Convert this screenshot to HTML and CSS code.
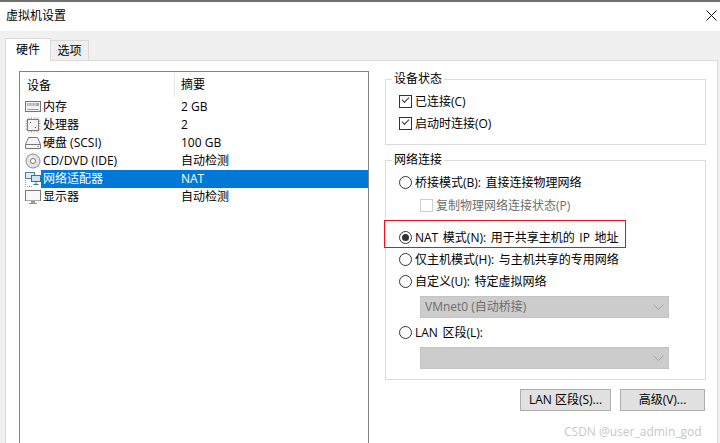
FILE: index.html
```html
<!DOCTYPE html>
<html lang="zh-CN">
<head>
  <meta charset="UTF-8" />
  <title>虚拟机设置</title>
  <link rel="stylesheet" href="styles.css">
</head>
<body>
  <div class="window">
    <div class="titlebar">
      <span>虚拟机设置</span>
      <svg class="close" width="11" height="11" viewBox="0 0 11 11"><path d="M.5.5l10 10M10.500.5l-10 10" stroke="#111" fill="none"/></svg>
    </div>

    <div class="main">
      <div class="tabs">
        <div class="tab active">硬件</div>
        <div class="tab">选项</div>
      </div>

      <div class="panel">
        <div class="list">
          <div class="list-head">
            <div class="col-name">设备</div>
            <div class="col-sum">摘要</div>
          </div>

          <div class="row">
            <div class="col-name">
              <svg class="icon" width="16" height="16" viewBox="0 0 16 16"><rect x=".5" y="2.500" width="15" height="10" fill="#f2f2f2" stroke="#777"/><rect x="2" y="4" width="12" height="3" fill="#a8a8a8"/><path d="M4 4v3M7 4v3M10 4v3" stroke="#eee"/><path d="M2.500 10.500h11" stroke="#999"/></svg>
              <span class="name">内存</span>
            </div>
            <div class="col-sum">2 GB</div>
          </div>
          <div class="row">
            <div class="col-name">
              <svg class="icon" width="16" height="16" viewBox="0 0 16 16"><rect x="2.500" y="2.500" width="11" height="11" fill="#f4f4f4" stroke="#777"/><path d="M4 .5v2M6.500 .5v2M9 .5v2M12 .5v2M4 13.500v2M6.500 13.500v2M9 13.500v2M12 13.500v2M.5 4h2M.5 6.500h2M.5 9h2M.5 12h2M13.500 4h2M13.500 6.500h2M13.500 9h2M13.500 12h2" stroke="#999"/><path d="M5 5h1v1H5zM10 10h1v1h-1z" fill="#555"/></svg>
              <span class="name">处理器</span>
            </div>
            <div class="col-sum">2</div>
          </div>
          <div class="row">
            <div class="col-name">
              <svg class="icon" width="16" height="16" viewBox="0 0 16 16"><path d="M3.500 2.500h9l3 7v4H.5v-4z" fill="#f6f6f6" stroke="#777"/><path d="M.5 9.500h15" stroke="#777"/><path d="M12 11.500h2" stroke="#999"/></svg>
              <span class="name">硬盘 (SCSI)</span>
            </div>
            <div class="col-sum">100 GB</div>
          </div>
          <div class="row">
            <div class="col-name">
              <svg class="icon" width="16" height="16" viewBox="0 0 16 16"><circle cx="8" cy="8" r="7" fill="#e4e4e4" stroke="#8a8a8a"/><circle cx="8" cy="8" r="2.500" fill="#fff" stroke="#777"/><path d="M4 6a4.500 4.500 0 0 1 3-2.500" stroke="#fff" fill="none"/></svg>
              <span class="name">CD/DVD (IDE)</span>
            </div>
            <div class="col-sum">自动检测</div>
          </div>
          <div class="row selected">
            <div class="col-name">
              <svg class="icon" width="16" height="16" viewBox="0 0 16 16"><rect x=".5" y="1.500" width="9" height="6" fill="#dfeaf5" stroke="#4a7fa8"/><rect x="6.500" y="4.500" width="9" height="6" fill="#cfe3f5" stroke="#2f76ad"/><path d="M11 11v2M8.500 13.500h5" stroke="#2f76ad"/><path d="M.5 9v6.500H7" stroke="#7a9ab5" stroke-dasharray="1 1" fill="none"/></svg>
              <span class="name sel-text">网络适配器</span>
            </div>
            <div class="col-sum">NAT</div>
          </div>
          <div class="row">
            <div class="col-name">
              <svg class="icon" width="16" height="16" viewBox="0 0 16 16"><rect x=".5" y="1.500" width="15" height="10" fill="#f8f8f8" stroke="#777"/><path d="M1 11.500h14" stroke="#aaa"/><path d="M6 12h4v2H6zM4 14h8v1H4z" fill="#999"/></svg>
              <span class="name">显示器</span>
            </div>
            <div class="col-sum">自动检测</div>
          </div>
        </div>

        <div class="side">
          <fieldset class="group status">
            <legend>设备状态</legend>
            <div class="opt"><span class="check on"></span>已连接(C)</div>
            <div class="opt"><span class="check on"></span>启动时连接(O)</div>
          </fieldset>

          <fieldset class="group network">
            <legend>网络连接</legend>
            <div class="opt"><span class="radio"></span>桥接模式(B): 直接连接物理网络</div>
            <div class="opt sub disabled"><span class="check"></span>复制物理网络连接状态(P)</div>
            <div class="opt nat"><span class="radio on"></span>NAT 模式(N): 用于共享主机的 IP 地址</div>
            <div class="opt"><span class="radio"></span>仅主机模式(H): 与主机共享的专用网络</div>
            <div class="opt"><span class="radio"></span>自定义(U): 特定虚拟网络</div>
            <div class="select">VMnet0 (自动桥接)<svg width="11" height="6" viewBox="0 0 11 6"><path d="M.5.500l5 5 5-5" stroke="#a6a6a6" fill="none"/></svg></div>
            <div class="opt lan"><span class="radio"></span>LAN 区段(L):</div>
            <div class="select">&nbsp;<svg width="11" height="6" viewBox="0 0 11 6"><path d="M.5.500l5 5 5-5" stroke="#a6a6a6" fill="none"/></svg></div>
          </fieldset>

          <div class="buttons">
            <div class="btn lan-btn">LAN 区段(S)...</div>
            <div class="btn adv-btn">高级(V)...</div>
          </div>
        </div>
      </div>
    </div>

    <div class="redbox"></div>
    <div class="watermark">CSDN @user_admin_god</div>
  </div>
</body>
</html>
```

FILE: styles.css
```css
html, body {
  margin: 0;
  padding: 0;
}
body {
  font-family: "Open Sans", "Noto Sans CJK SC", sans-serif;
  font-size: 12px;
  color: #000;
  background: #fff;
}
.window {
  position: relative;
  width: 720px;
  height: 443px;
  overflow: hidden;
}
.titlebar {
  height: 26px;
  border-top: 2px solid #707070;
  padding: 0 3px 3px 6px;
  display: flex;
  justify-content: space-between;
  align-items: center;
  background: #fff;
}
.main {
  background: #f0f0f0;
  padding: 7px 2px 0 5px;
  height: 405px;
}
.tabs {
  display: flex;
  align-items: flex-end;
  height: 22px;
}
.tab {
  height: 19px;
  line-height: 19px;
  width: 37px;
  text-align: center;
  background: #f0f0f0;
  border: 1px solid #d9d9d9;
  border-bottom: none;
  border-left: none;
}
.tab.active {
  position: relative;
  height: 22px;
  line-height: 22px;
  width: 44px;
  background: #fff;
  border-left: 1px solid #d9d9d9;
  margin-bottom: -1px;
  z-index: 1;
}
.panel {
  background: #fff;
  border: 1px solid #d9d9d9;
  height: 400px;
  padding: 10px 11px 0 13px;
  display: flex;
  gap: 16px;
}
.list {
  width: 348px;
  height: 400px;
  border: 1px solid #828282;
  flex-shrink: 0;
}
.list-head {
  display: flex;
  height: 26px;
  align-items: center;
}
.list-head .col-name {
  width: 154px;
  padding-left: 7px;
  box-sizing: border-box;
}
.list-head .col-sum {
  height: 24px;
  line-height: 24px;
  border-left: 1px solid #e5e5e5;
  padding-left: 6px;
}
.row {
  display: flex;
  height: 18px;
  line-height: 18px;
}
.col-name {
  width: 154px;
  display: flex;
  align-items: center;
}
.col-sum {
  padding-left: 7px;
  flex: 1;
}
.icon {
  margin-left: 5px;
  flex-shrink: 0;
}
.name {
  padding-left: 2px;
}
.row.selected .col-sum {
  background: #0078d7;
  color: #fff;
}
.sel-text {
  background: #0078d7;
  color: #fff;
  flex: 1;
}
.side {
  width: 321px;
  flex-shrink: 0;
}
.group {
  margin: 0;
  padding: 0 0 0 13px;
  border: 1px solid #dcdcdc;
  min-width: 0;
}
.group legend {
  padding: 0 2px;
  margin-left: -7px;
  line-height: 16px;
}
.status {
  height: 69px;
  padding-top: 3px;
}
.network {
  margin-top: 7px;
  padding-top: 3px;
  padding-bottom: 10px;
}
.opt {
  display: flex;
  align-items: center;
  height: 22px;
  word-spacing: 1.5px;
}
.sub {
  margin-left: 21px;
  margin-top: 1px;
}
.nat {
  margin-top: 10px;
}
.lan {
  margin-top: 3px;
}
.disabled {
  color: #6d6d6d;
}
.check {
  width: 11px;
  height: 11px;
  border: 1px solid #333;
  margin-right: 3px;
  flex-shrink: 0;
  background: #fff;
  position: relative;
}
.check.on::after {
  content: "";
  position: absolute;
  left: 2px;
  top: 1px;
  width: 6px;
  height: 3px;
  border-left: 1px solid #333;
  border-bottom: 1px solid #333;
  transform: rotate(-45deg);
}
.disabled .check {
  border-color: #cfcfcf;
}
.radio {
  width: 11px;
  height: 11px;
  border: 1px solid #333;
  border-radius: 50%;
  margin-right: 3px;
  flex-shrink: 0;
  position: relative;
}
.radio.on::after {
  content: "";
  position: absolute;
  left: 2px;
  top: 2px;
  width: 7px;
  height: 7px;
  border-radius: 50%;
  background: #333;
}
.select {
  width: 249px;
  height: 22px;
  line-height: 22px;
  margin-left: 21px;
  margin-top: 4px;
  box-sizing: border-box;
  padding: 0 4px;
  background: #cccccc;
  border: 1px solid #c4c4c4;
  color: #6d6d6d;
  display: flex;
  justify-content: space-between;
  align-items: center;
}
.buttons {
  display: flex;
  justify-content: flex-end;
  gap: 9px;
  margin-top: 9px;
  padding-right: 1px;
}
.btn {
  height: 20px;
  line-height: 20px;
  text-align: center;
  background: #e1e1e1;
  border: 1px solid #adadad;
}
.lan-btn {
  width: 89px;
}
.adv-btn {
  width: 83px;
}
.redbox {
  position: absolute;
  left: 384px;
  top: 220px;
  width: 240px;
  height: 26px;
  border: 1px solid #e8131a;
}
.watermark {
  position: absolute;
  left: 564px;
  top: 423px;
  font-size: 12px;
  color: #c8c8c8;
}
```
